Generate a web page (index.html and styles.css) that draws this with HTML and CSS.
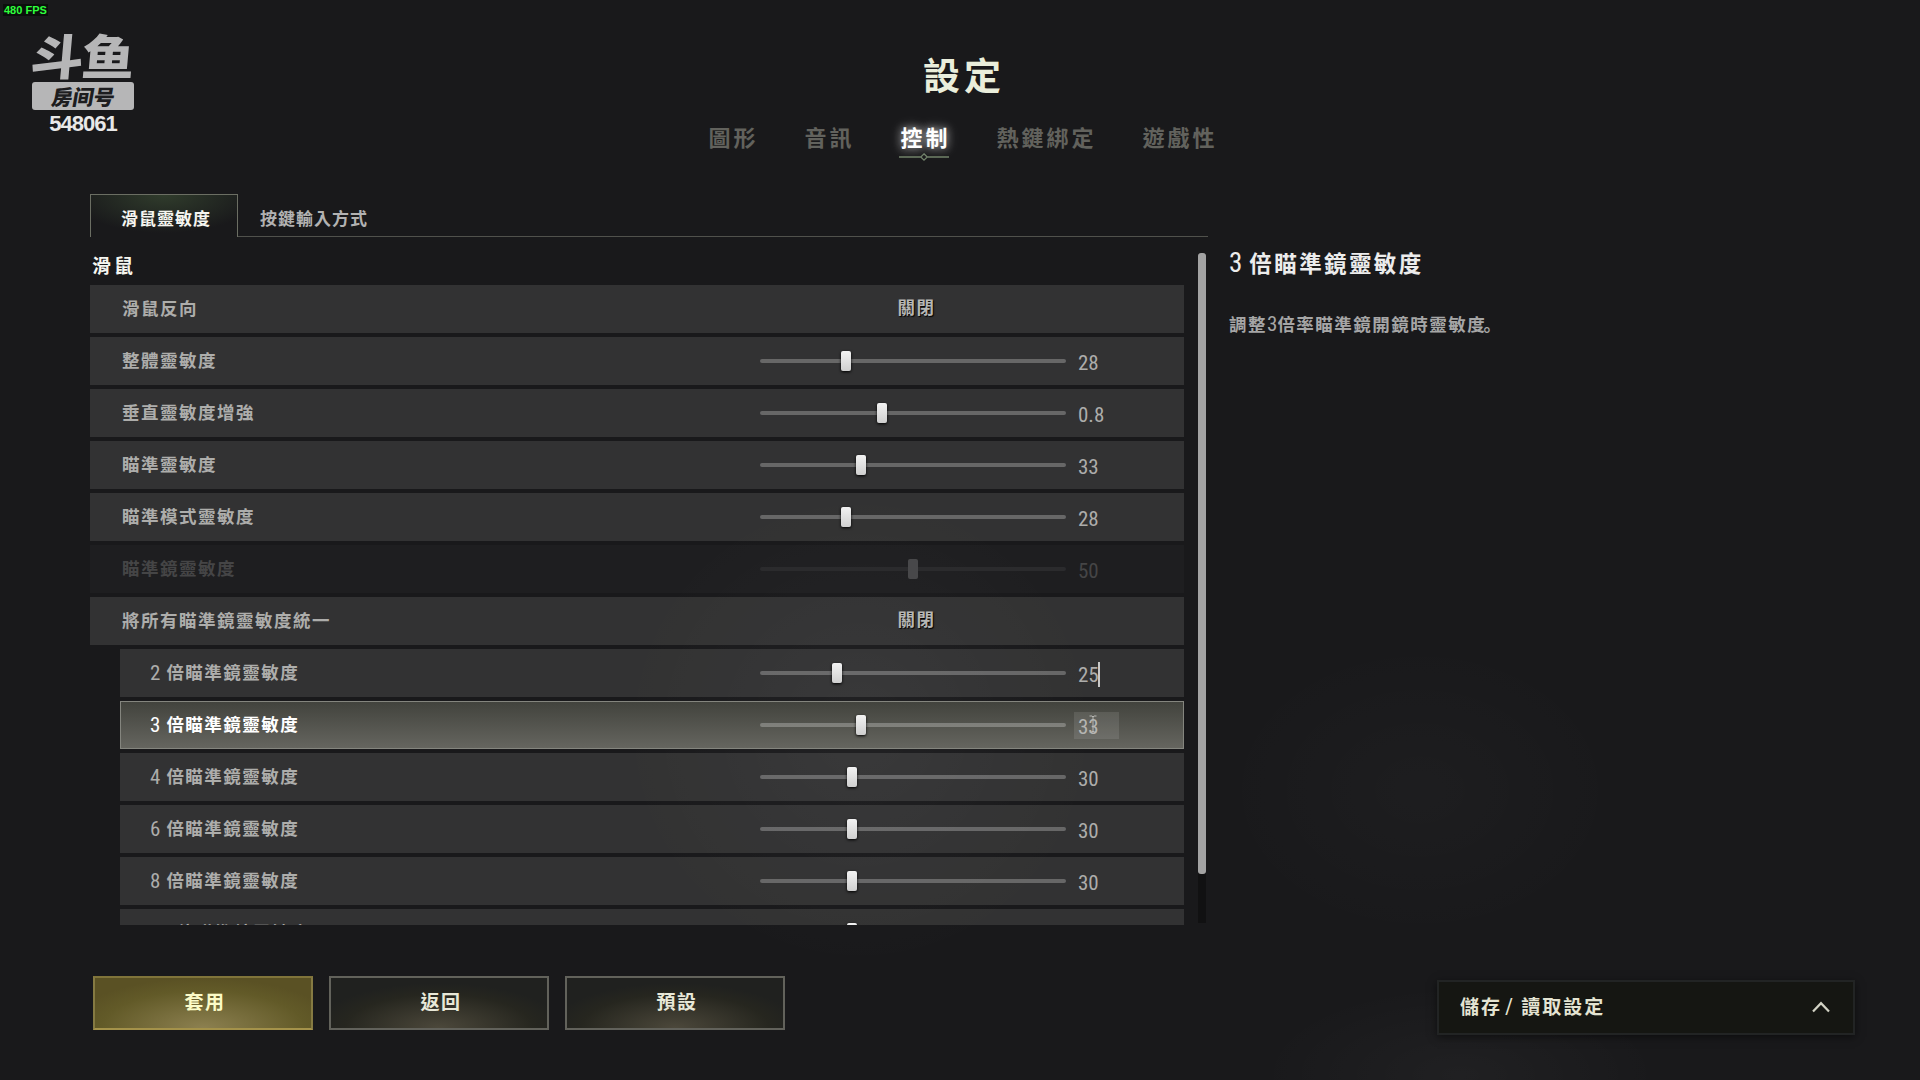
FILE: index.html
```html
<!DOCTYPE html>
<html lang="zh-Hant">
<head>
    <meta charset="UTF-8">
    <title>設定</title>
    <link rel="stylesheet" href="styles.css">
</head>
<body>
<div id="fps">480 FPS</div>
<div id="watermark">
    <div class="logo"><span>斗</span><span>鱼</span></div>
    <div class="room"><span>房间号</span></div>
    <div class="room-id">548061</div>
</div>

<div id="page">
    <div id="header">
        <h1>設定</h1>
        <ul id="nav">
            <li>圖形</li>
            <li>音訊</li>
            <li class="nav-selected">控制
                <svg width="50" height="10" viewBox="0 0 50 10"><path d="M0 5H21.5M28.5 5H50M25 1.8L28.2 5L25 8.2L21.8 5Z"/></svg>
            </li>
            <li>熱鍵綁定</li>
            <li>遊戲性</li>
        </ul>
    </div>

    <div id="main">
        <div id="left">
            <ul id="tabs">
                <li class="tab-selected">滑鼠靈敏度</li>
                <li>按鍵輸入方式</li>
            </ul>
            <div id="scroll">
                <div id="list">
                    <h2>滑鼠</h2>
                    <div class="row"><div class="label">滑鼠反向</div><div class="toggle">關閉</div></div>
                    <div class="row"><div class="label">整體靈敏度</div><div class="slider"><i style="left:28%"></i></div><div class="value">28</div></div>
                    <div class="row"><div class="label">垂直靈敏度增強</div><div class="slider"><i style="left:40%"></i></div><div class="value">0.8</div></div>
                    <div class="row"><div class="label">瞄準靈敏度</div><div class="slider"><i style="left:33%"></i></div><div class="value">33</div></div>
                    <div class="row"><div class="label">瞄準模式靈敏度</div><div class="slider"><i style="left:28%"></i></div><div class="value">28</div></div>
                    <div class="row disabled"><div class="label">瞄準鏡靈敏度</div><div class="slider"><i style="left:50%"></i></div><div class="value">50</div></div>
                    <div class="row"><div class="label">將所有瞄準鏡靈敏度統一</div><div class="toggle">關閉</div></div>
                    <div class="row sub"><div class="label"><b>2</b>倍瞄準鏡靈敏度</div><div class="slider"><i style="left:25%"></i></div><div class="value caret">25</div></div>
                    <div class="row sub active"><div class="label"><b>3</b>倍瞄準鏡靈敏度</div><div class="slider"><i style="left:33%"></i></div><div class="value hover">33
                        <svg class="ibeam" width="8" height="18" viewBox="0 0 8 18"><path d="M.5 1H3L4 2L5 1H7.5M4 2V16M.5 17H3L4 16L5 17H7.5"/></svg>
                    </div></div>
                    <div class="row sub"><div class="label"><b>4</b>倍瞄準鏡靈敏度</div><div class="slider"><i style="left:30%"></i></div><div class="value">30</div></div>
                    <div class="row sub"><div class="label"><b>6</b>倍瞄準鏡靈敏度</div><div class="slider"><i style="left:30%"></i></div><div class="value">30</div></div>
                    <div class="row sub"><div class="label"><b>8</b>倍瞄準鏡靈敏度</div><div class="slider"><i style="left:30%"></i></div><div class="value">30</div></div>
                    <div class="row sub"><div class="label"><b>15</b>倍瞄準鏡靈敏度</div><div class="slider"><i style="left:30%"></i></div><div class="value">30</div></div>
                </div>
                <div id="bar"><div class="thumb"></div></div>
            </div>
        </div>
        <div id="info">
            <h3><b>3</b>倍瞄準鏡靈敏度</h3>
            <p>調整<b>3</b>倍率瞄準鏡開鏡時靈敏度<span class="stop" lang="zh-Hans">。</span></p>
        </div>
    </div>

    <div id="footer">
        <div class="btn apply">套用</div>
        <div class="btn">返回</div>
        <div class="btn">預設</div>
        <div id="save">
            <span>儲存<em>/</em>讀取設定</span>
            <svg width="18" height="12" viewBox="0 0 18 12"><path d="M1 10.5L9 2.2L17 10.5"/></svg>
        </div>
    </div>
</div>
</body>
</html>
```

FILE: styles.css
```css
*{
    margin: 0;
    padding: 0;
    box-sizing: border-box;
}
body{
    width: 1920px;
    height: 1080px;
    overflow: hidden;
    background-color: #19191b;
    background-image: radial-gradient(ellipse 240px 240px at 860px 730px, rgba(255,255,255,.035), transparent),
        radial-gradient(ellipse 200px 150px at 1420px 790px, rgba(255,255,255,.02), transparent),
        radial-gradient(ellipse 200px 90px at 1460px 1075px, rgba(255,255,255,.03), transparent);
    font-family: "Noto Sans CJK TC", sans-serif;
    font-weight: 700;
}
li{
    list-style: none;
}
b, em, .value{
    font-family: Roboto, sans-serif;
    font-stretch: 75%;
    font-weight: 400;
    font-style: normal;
}

/* overlays */
#fps{
    position: absolute;
    left: 3px;
    top: 4px;
    padding: 0 1px;
    background-color: #0b0f0c;
    color: #2eff3c;
    font: bold 11px/12px "Liberation Sans", sans-serif;
}
#watermark{
    position: absolute;
    left: 32px;
    top: 34px;
    width: 102px;
    color: #b6b6b7;
    font-family: "Noto Sans CJK SC", sans-serif;
    text-align: center;
}
.logo{
    display: flex;
    height: 44px;
    font-size: 49px;
    font-weight: 900;
    line-height: 40px;
}
.logo span{
    width: 51px;
    transform: skewX(-5deg) scale(1.08, .98);
}
.room{
    height: 28px;
    margin-top: 4px;
    border-radius: 3px;
    background-color: #b6b6b7;
    color: #1d1d1f;
    font-size: 21px;
    font-weight: 900;
    line-height: 28px;
}
.room span{
    display: inline-block;
    transform: skewX(-10deg);
}
.room-id{
    color: #e8e8e8;
    font: bold 22px/28px "Liberation Sans", sans-serif;
    letter-spacing: -1px;
}

#page{
    display: flex;
    flex-direction: column;
    height: 1080px;
}
#header{
    height: 194px;
    padding-top: 47px;
}
h1{
    padding-left: 8px;
    color: #eaeedb;
    font-size: 37px;
    font-weight: 700;
    letter-spacing: 4px;
    line-height: 54px;
    text-align: center;
}
#nav{
    display: flex;
    gap: 46px;
    margin: 17px 0 0 708.5px;
    color: #62625d;
    font-size: 22px;
    letter-spacing: 3px;
    line-height: 36px;
}
#nav li{
    position: relative;
}
#nav .nav-selected{
    color: #fff;
    text-shadow: 0 0 8px rgba(255,255,255,.6), 0 0 14px rgba(255,255,255,.35);
}
#nav svg{
    position: absolute;
    left: -2px;
    top: 34px;
    fill: none;
    stroke: #71826a;
    stroke-width: 1.3;
}

#main{
    display: flex;
    height: 731px;
    padding-left: 90px;
}
#left{
    width: 1118px;
}
#tabs{
    display: flex;
    height: 43px;
    color: #b2b2b2;
    font-size: 17px;
    letter-spacing: 1px;
    line-height: 48px;
}
#tabs li{
    flex: 1;
    padding-left: 22px;
    border-bottom: 1px solid #50514c;
}
#tabs .tab-selected{
    flex: none;
    width: 148px;
    padding-left: 30px;
    border: 1px solid #6b6e63;
    border-bottom: 0;
    background: radial-gradient(ellipse 95px 38px at 50% 0, #303c2c, transparent);
    color: #f5f5ef;
    line-height: 46px;
}
#scroll{
    display: flex;
    justify-content: space-between;
    height: 688px;
    padding-right: 2px;
}
#list{
    width: 1094px;
    overflow: hidden;
}
h2{
    height: 48px;
    padding: 13px 0 0 2px;
    color: #f5f5ef;
    font-size: 19px;
    letter-spacing: 3px;
    line-height: 29px;
}
.row{
    display: flex;
    align-items: center;
    height: 48px;
    margin-bottom: 4px;
    padding-left: 32px;
    background-color: rgba(255,255,250,.11);
    color: #adadab;
}
.label{
    flex: 1;
    padding-bottom: 2px;
    font-size: 17.5px;
    letter-spacing: 1.5px;
    line-height: 46px;
}
.sub{
    margin-left: 30px;
    padding-left: 30px;
}
.label b{
    position: relative;
    top: 1px;
    margin-right: 6px;
    font-size: 21px;
    letter-spacing: 0;
}
.toggle{
    width: 306px;
    margin-right: 118px;
    padding: 0 0 5px 7px;
    font-size: 17.5px;
    letter-spacing: 1.6px;
    text-align: center;
    text-shadow: 1px 1px 1px #000;
    color: #b6b6b4;
}
.slider{
    position: relative;
    width: 306px;
    height: 4px;
    border-radius: 2px;
    background-color: rgba(255,255,255,.26);
}
.slider i{
    position: absolute;
    top: -8px;
    width: 10px;
    height: 20px;
    margin-left: -5px;
    border-radius: 2px;
    background: linear-gradient(#f2f2f2, #cfcfcf);
    box-shadow: 0 1px 3px #000;
}
.value{
    position: relative;
    width: 45px;
    height: 27px;
    margin: 0 65px 0 8px;
    padding-left: 4px;
    font-size: 21px;
    line-height: 31px;
}
.disabled{
    background-color: rgba(255,255,255,.025);
    color: #454546;
}
.disabled .slider{
    background-color: #2b2b2d;
}
.disabled i{
    background: #48484a;
    box-shadow: none;
}
.active{
    border: 1px solid #84857e;
    background: linear-gradient(#42433d, #65655f);
    color: #fff;
    padding-left: 29px;
}
.active .value{
    margin-right: 64px;
}
.hover{
    background-color: rgba(255,255,255,.1);
    color: #b5b5b2;
}
.caret::after{
    content: "";
    position: absolute;
    left: 24px;
    top: 2px;
    width: 2px;
    height: 25px;
    background-color: #c8c8c8;
}
.ibeam{
    position: absolute;
    left: 15px;
    top: 3px;
    fill: none;
    stroke: #b8b8b4;
}
#bar{
    width: 8px;
    height: 670px;
    margin-top: 16px;
    background-color: #111112;
}
#bar .thumb{
    height: 621px;
    border-radius: 3px;
    background-color: #a3a3a3;
}

#info{
    padding: 48px 0 0 21px;
    color: #ececec;
}
h3{
    font-size: 22.5px;
    letter-spacing: 2.4px;
    line-height: 40px;
}
h3 b{
    margin-right: 7px;
    font-size: 27px;
    letter-spacing: 0;
}
p{
    margin-top: 26px;
    color: #a6a6a6;
    font-size: 17.5px;
    letter-spacing: 1.5px;
    line-height: 30px;
}
p b{
    font-size: 21px;
    letter-spacing: 0;
}
p .stop{
    margin-left: -3px;
    font-family: "Noto Sans CJK SC", sans-serif;
}

#footer{
    display: flex;
    gap: 16px;
    margin-top: 51px;
    padding-left: 93px;
    font-size: 19px;
}
.btn{
    width: 220px;
    height: 54px;
    padding-left: 4px;
    border: 2px solid #62625b;
    background: radial-gradient(ellipse 125px 45px at 50% 100%, #4c483b, #26261f 75%, #20211f);
    color: #e8e8d8;
    letter-spacing: 1.5px;
    line-height: 46px;
    text-align: center;
}
.apply{
    border-color: #80743a #857a42 #a4924a;
    background: radial-gradient(ellipse 135px 50px at 50% 100%, #8c8050, #625a28 75%, #5a5124);
    color: #fbfbc8;
}
#save{
    display: flex;
    justify-content: space-between;
    align-items: center;
    width: 418px;
    height: 55px;
    margin: 4px 0 0 636px;
    padding: 0 23px 4px 21px;
    border: 2px solid #222424;
    background-color: #151612;
    box-shadow: 0 2px 8px rgba(0,0,0,.5);
    color: #e4e4d2;
    letter-spacing: 2px;
}
#save em{
    margin: 0 6px 0 3px;
    font-size: 22px;
}
#save svg{
    margin-top: 3px;
    fill: none;
    stroke: #d2d2c4;
    stroke-width: 2.2;
}
```
